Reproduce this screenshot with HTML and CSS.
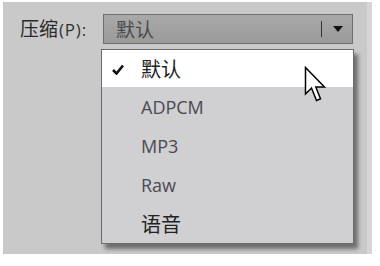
FILE: index.html
```html
<!DOCTYPE html>
<html lang="zh-CN">

<head>
  <meta charset="UTF-8">
  <title>压缩</title>
  <link rel="stylesheet" href="styles.css">
</head>

<body>
  <div class="panel">
    <div class="field">
      <label class="label">压缩<span class="key">(P):</span></label>
      <div class="combo">
        <span class="combo-value">默认</span>
        <span class="combo-sep"></span>
        <span class="combo-arrow"></span>
      </div>
    </div>

    <!-- выпадающий список -->
    <ul class="menu">
      <li class="item selected">
        <svg class="check" width="12" height="11" viewBox="0 0 12 11">
          <path d="M1 6 L4.5 9.5 L11 1.5" fill="none" stroke="#111" stroke-width="2.6"/>
        </svg>
        <span class="cjk">默认</span>
      </li>
      <li class="item"><span class="latin">ADPCM</span></li>
      <li class="item"><span class="latin">MP3</span></li>
      <li class="item"><span class="latin">Raw</span></li>
      <li class="item"><span class="cjk">语音</span></li>
    </ul>

    <svg class="cursor" width="23" height="38" viewBox="0 0 23 38">
      <path d="M1.5 1.5 L1.5 28 L7.5 22 L12.5 34.5 L16.5 32.8 L11.8 21 L20.5 21 Z" fill="#fff" stroke="#000" stroke-width="1.5" stroke-linejoin="miter"/>
    </svg>
  </div>
</body>

</html>
```

FILE: styles.css
```css
body {
  margin: 0;
  background: #fff;
  font-family: "Noto Sans CJK SC", "Noto Sans", sans-serif;
}

.panel {
  position: relative;
  width: 369px;
  height: 252px;
  margin: 2px 0 0 3px;
  padding-top: 11px;
  box-sizing: border-box;
  background: #c9c9c9;
  border-right: 5px solid #d6d6d6;
}

.field {
  display: flex;
  align-items: center;
}

.label {
  width: 100px;
  padding-left: 17px;
  box-sizing: border-box;
  font-size: 19px;
  color: #2a2a2a;
  line-height: 30px;
  white-space: nowrap;
}

.key {
  margin-left: 1px;
  font-family: "Open Sans", sans-serif;
  font-size: 17px;
  letter-spacing: 0.8px;
  color: #333;
}

.combo {
  display: flex;
  align-items: center;
  width: 250px;
  height: 30px;
  box-sizing: border-box;
  border: 1px solid #6f6f6f;
  background: linear-gradient(#a9a9a9, #9a9a9a);
}

.combo-value {
  flex: 1;
  padding-left: 12px;
  font-size: 19px;
  color: #4a4a4a;
  line-height: 28px;
}

.combo-sep {
  width: 1px;
  height: 16px;
  background: #333;
  margin-right: 11px;
}

.combo-arrow {
  width: 0;
  height: 0;
  border-left: 5px solid transparent;
  border-right: 5px solid transparent;
  border-top: 6px solid #111;
  margin-right: 9px;
}

.menu {
  list-style: none;
  margin: 4px 0 0 98px;
  padding: 0;
  width: 253px;
  box-sizing: border-box;
  border: 1px solid #6c6c6c;
  background: #d0cfd2;
  box-shadow: 4px 5px 4px rgba(0, 0, 0, 0.45);
}

.item {
  position: relative;
  height: 39px;
  display: flex;
  align-items: center;
  padding-left: 39px;
}

.item.selected {
  height: 37px;
  background: #fff;
}

.check {
  position: absolute;
  left: 10px;
  top: 14px;
}

.cjk {
  font-size: 20px;
  color: #222;
}

.latin {
  font-family: "Open Sans", sans-serif;
  font-size: 18px;
  color: #4a4a52;
}

.cursor {
  position: absolute;
  left: 301px;
  top: 64px;
}
```
